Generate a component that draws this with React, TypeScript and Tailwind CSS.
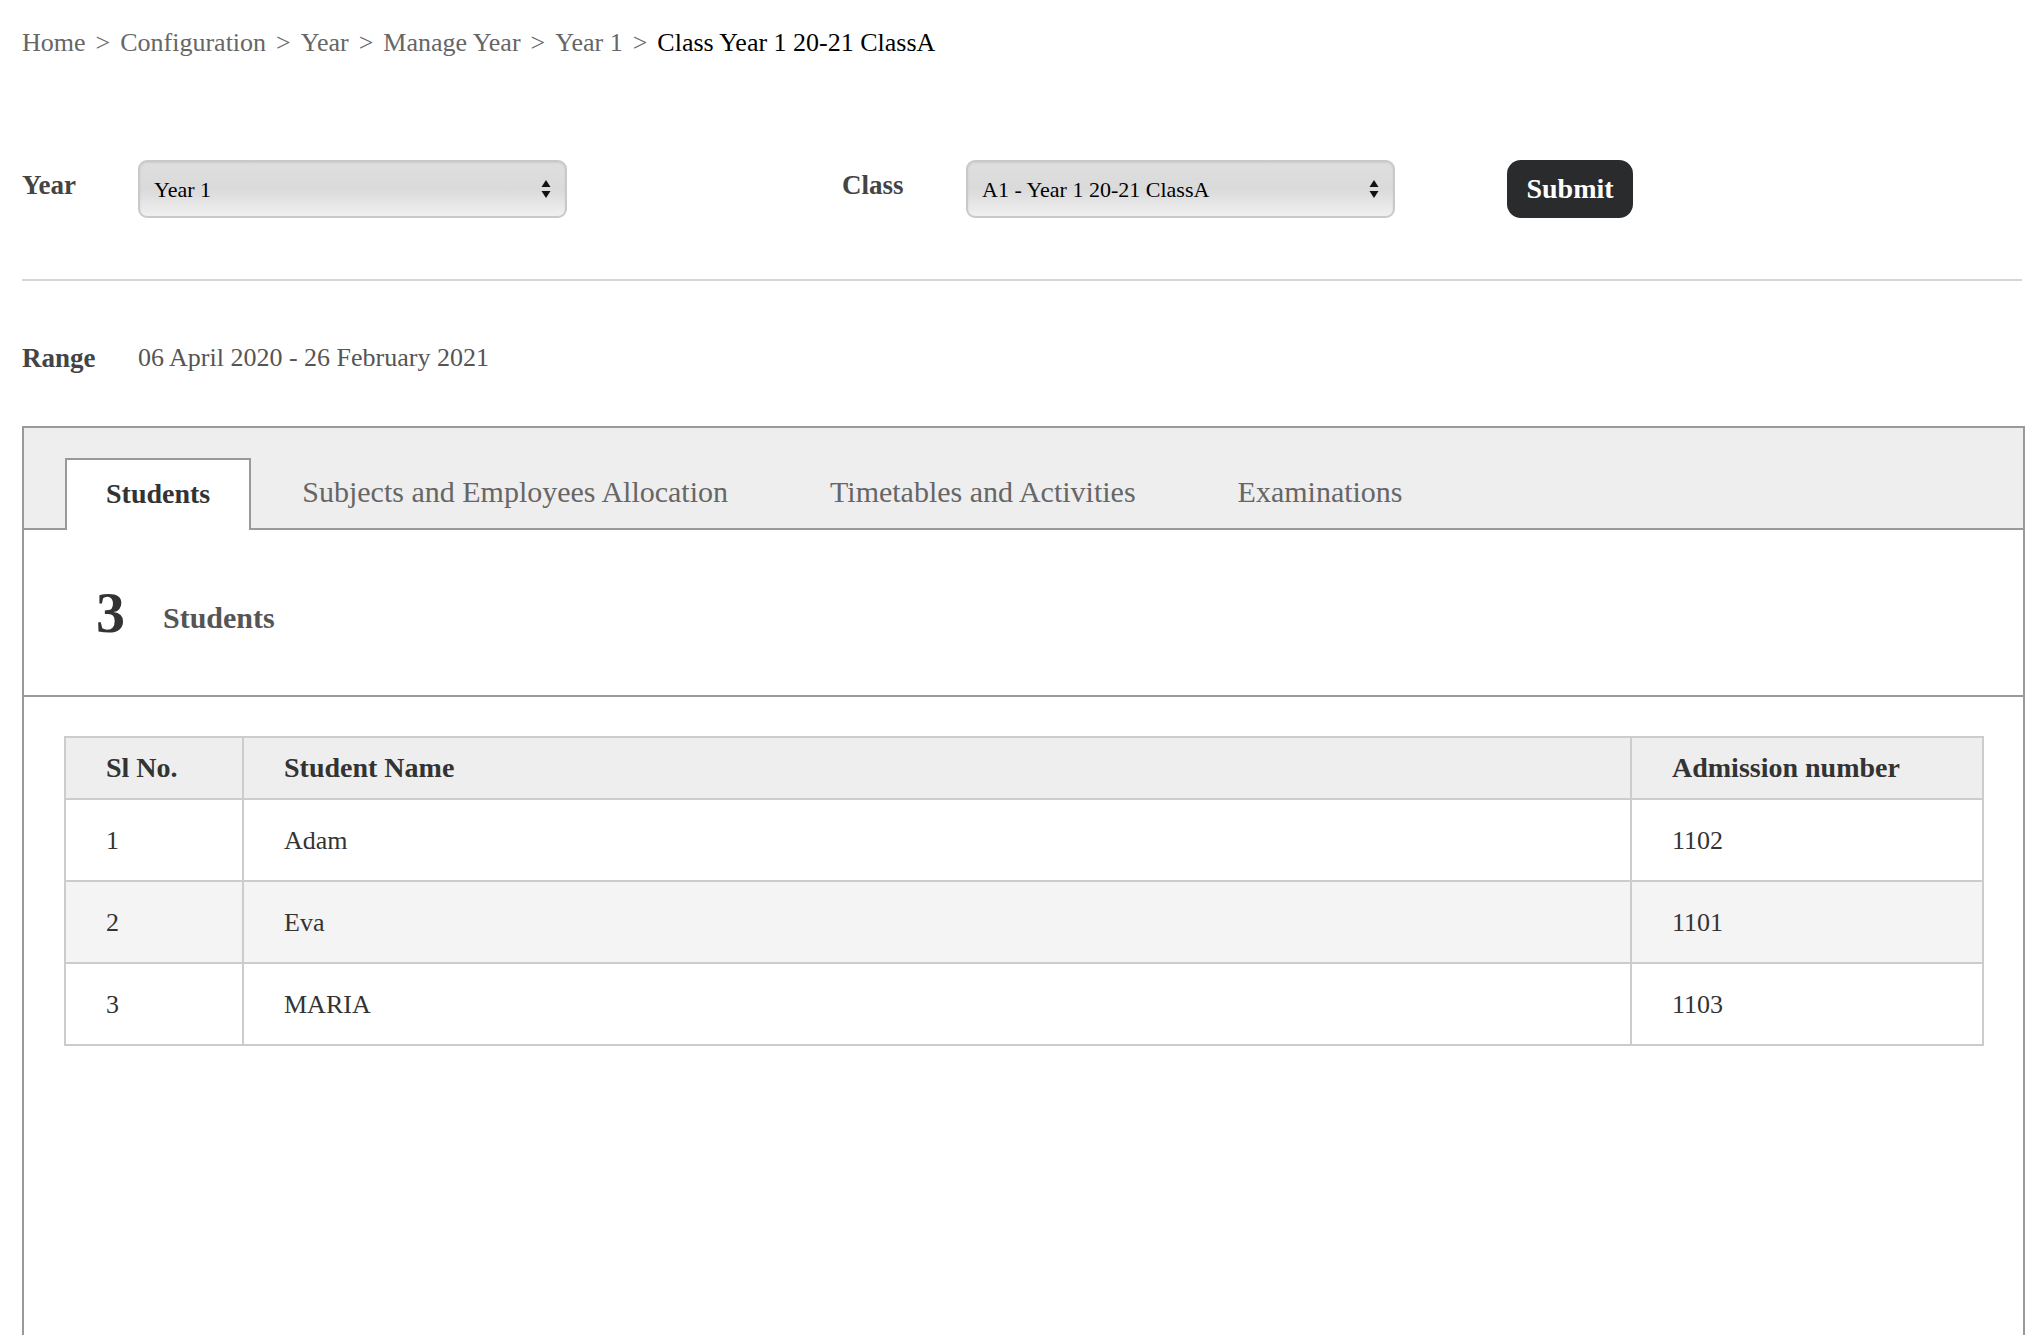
import React, { useState } from 'react';

const students = [
  { sl: 1, name: 'Adam', admission: '1102' },
  { sl: 2, name: 'Eva', admission: '1101' },
  { sl: 3, name: 'MARIA', admission: '1103' },
];

const crumbs = ['Home', 'Configuration', 'Year', 'Manage Year', 'Year 1'];

const tabs = ['Students', 'Subjects and Employees Allocation', 'Timetables and Activities', 'Examinations'];

function SelectBox({ value }: { value: string }) {
  return (
    <div className="flex h-[58px] w-[429px] items-center justify-between rounded-[9px] border-2 border-[#c9c9c9] bg-linear-to-b from-[#dfdfdf] via-[#dadada] to-[#f0f0f0] pl-[14px] pr-[13px] shadow-[inset_0_1px_2px_rgba(0,0,0,0.08)]">
      <span className="mt-[1px] text-[22px] text-black">{value}</span>
      <svg width="12" height="24" viewBox="0 0 12 24">
        <path d="M6 3 L10.5 10 L1.5 10 Z" fill="#111" />
        <path d="M1.5 14 L10.5 14 L6 21 Z" fill="#111" />
      </svg>
    </div>
  );
}

export default function App() {
  const [activeTab, setActiveTab] = useState(0);

  return (
    <div className="min-h-[1336px] bg-white pl-[22px] pr-[5px] font-['Liberation_Serif',serif]">
      {/* breadcrumb */}
      <div className="pt-[28px] text-[26px] leading-[30px] text-[#666]">
        {crumbs.map((c) => (
          <React.Fragment key={c}>
            {c}
            <span className="px-[10px]">&gt;</span>
          </React.Fragment>
        ))}
        <span className="text-black">Class Year 1 20-21 ClassA</span>
      </div>

      {/* filters */}
      <div className="mt-[102px] flex items-start">
        <div className="mt-[10px] w-[116px] text-[27px] font-bold leading-[30px] text-[#444]">Year</div>
        <SelectBox value="Year 1" />
        <div className="ml-[275px] mt-[10px] w-[124px] text-[27px] font-bold leading-[30px] text-[#444]">Class</div>
        <SelectBox value="A1 - Year 1 20-21 ClassA" />
        <button className="ml-[112px] h-[58px] w-[126px] rounded-[14px] bg-[#2a2b2d] text-[28px] font-bold text-white">
          Submit
        </button>
      </div>

      <div className="mr-[3px] mt-[61px] h-[2px] bg-[#d6d6d6]" />

      {/* range */}
      <div className="mt-[62px] flex items-center text-[26px] leading-[30px]">
        <span className="w-[116px] text-[27px] font-bold text-[#444]">Range</span>
        <span className="text-[#555]">06 April 2020 - 26 February 2021</span>
      </div>

      {/* tabs panel */}
      <div className="mt-[53px] min-h-[909px] border-2 border-b-0 border-[#999]">
        <div className="flex items-end border-b-2 border-[#999] bg-[#eee] pl-[41px] pt-[30px]">
          {tabs.map((t, i) =>
            i === activeTab ? (
              <button
                key={t}
                onClick={() => setActiveTab(i)}
                className="relative -mb-[2px] flex h-[72px] items-center border-2 border-b-0 border-[#999] bg-white px-[39px] pb-[3px] text-[28px] font-bold text-[#333]"
              >
                {t}
              </button>
            ) : (
              <button
                key={t}
                onClick={() => setActiveTab(i)}
                className="flex h-[70px] items-center px-[51px] pb-[3px] text-[30px] text-[#666]"
              >
                {t}
              </button>
            )
          )}
        </div>

        <div className="flex h-[167px] items-center border-b-2 border-[#999] pl-[72px] pt-[1px]">
          <span className="text-[58px] font-bold leading-[58px] text-[#333]">3</span>
          <span className="ml-[38px] mt-[10px] text-[30px] font-bold leading-[34px] text-[#555]">Students</span>
        </div>

        <div className="pl-[40px] pr-[39px] pt-[39px]">
          <table className="w-full border-collapse text-left text-[26px] text-[#333]">
            <thead>
              <tr className="h-[62px] bg-[#eee]">
                <th className="w-[178px] border-2 border-[#ccc] pl-[40px] text-[28px] font-bold">Sl No.</th>
                <th className="border-2 border-[#ccc] pl-[40px] text-[28px] font-bold">Student Name</th>
                <th className="w-[352px] border-2 border-[#ccc] pl-[40px] text-[28px] font-bold">Admission number</th>
              </tr>
            </thead>
            <tbody>
              {students.map((s, i) => (
                <tr key={s.sl} className={i % 2 === 1 ? 'h-[82px] bg-[#f4f4f4]' : 'h-[82px] bg-white'}>
                  <td className="border-2 border-[#ccc] pl-[40px]">{s.sl}</td>
                  <td className="border-2 border-[#ccc] pl-[40px]">{s.name}</td>
                  <td className="border-2 border-[#ccc] pl-[40px]">{s.admission}</td>
                </tr>
              ))}
            </tbody>
          </table>
        </div>
      </div>
    </div>
  );
}
